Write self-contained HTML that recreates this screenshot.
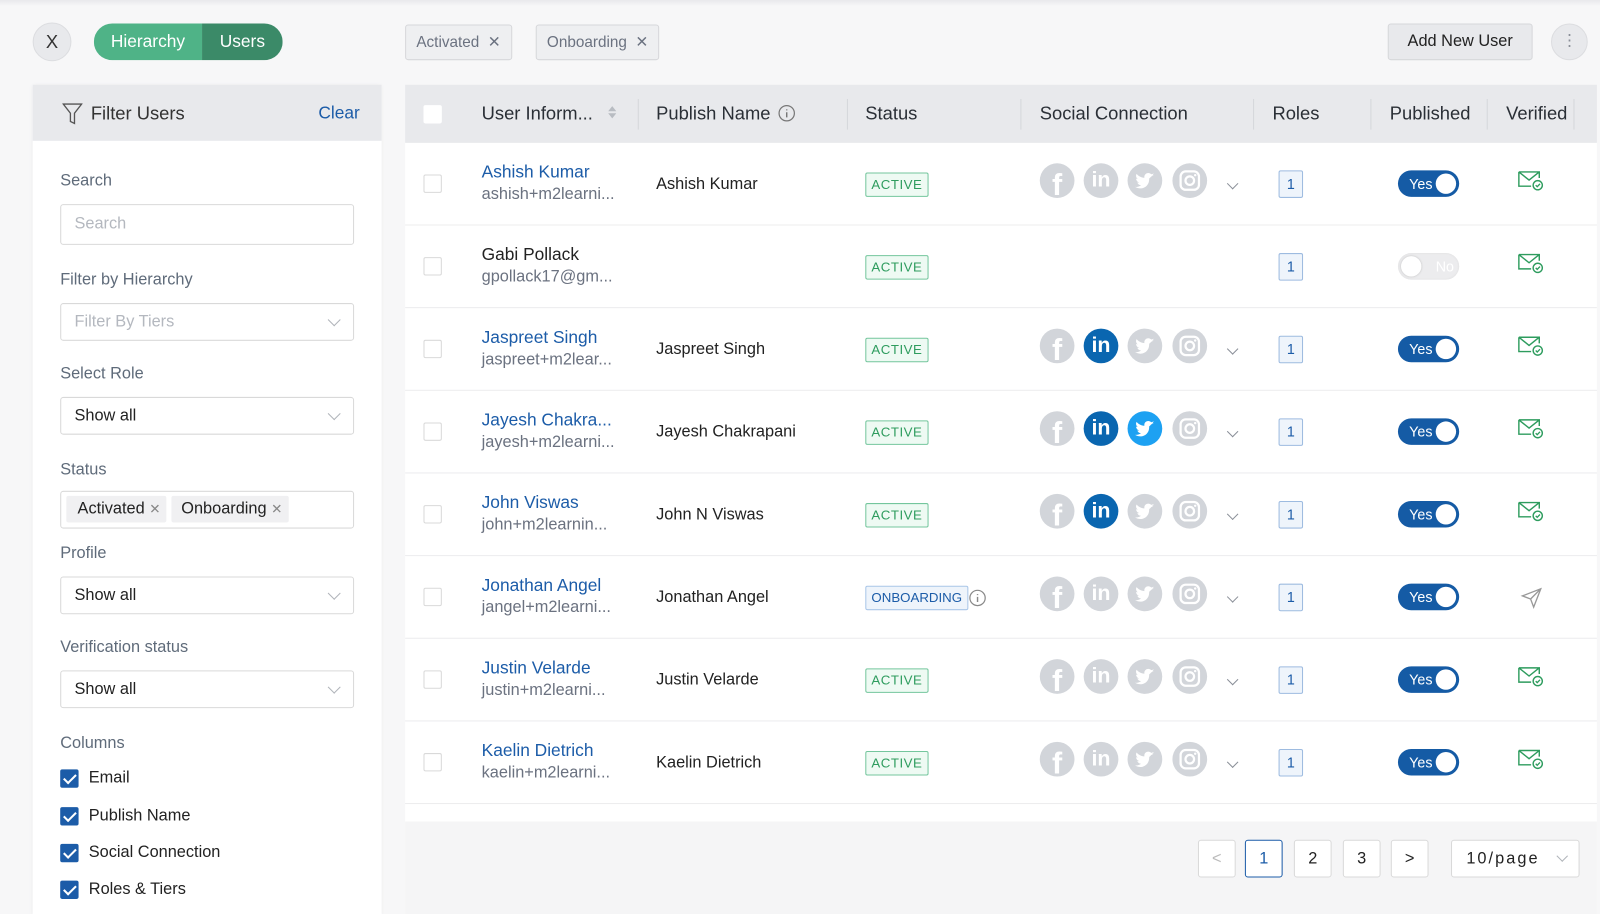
<!DOCTYPE html>
<html><head><meta charset="utf-8"><style>
*{box-sizing:border-box;margin:0;padding:0}
body{width:1600px;height:896px;overflow:hidden;background:#f7f7f8;font-family:"Liberation Sans",Arial,sans-serif;color:#1f2329;position:relative}
#w{position:absolute;left:0;top:0;width:1568px;height:878px;transform:scale(1.0204);transform-origin:0 0}
.a{position:absolute}
.topbar{left:0;top:0;width:1568px;height:6px;background:linear-gradient(#e9e9ec,#f7f7f8)}
.xbtn{left:32px;top:22px;width:38px;height:38px;border-radius:50%;background:#e8e9ec;border:1px solid #dcdde0;text-align:center;line-height:36px;font-size:18px;color:#333}
.seg{left:92px;top:23px;height:36px;width:185px;border-radius:18px;overflow:hidden;display:flex;font-size:17px;color:#fff}
.seg div{line-height:36px;text-align:center}
.chip{top:24px;height:35px;border:1px solid #d6d7da;border-radius:3px;background:#eeeff1;color:#6b7280;font-size:15px;line-height:33px;padding:0 10px}
.addb{left:1360px;top:23px;width:142px;height:36px;background:#e8e9ec;border:1px solid #d6d7da;border-radius:3px;font-size:16px;line-height:34px;text-align:center;color:#222}
.dots{left:1520px;top:23px;width:36px;height:36px;border-radius:50%;background:#e8e9ec;border:1px solid #dcdde0;color:#8a8f98;text-align:center;font-size:16px;line-height:33px}
.lp{left:32px;top:83px;width:342px;height:813px;background:#fff;box-shadow:0 1px 4px rgba(0,0,0,.06)}
.lph{left:0;top:0;width:342px;height:55px;background:#e8e9ec}
.lbl{left:27px;font-size:16px;color:#5f6b7a}
.inp{left:27px;width:288px;height:37px;border:1px solid #d9d9d9;border-radius:3px;background:#fff;font-size:16px;line-height:35px;padding-left:13px;color:#222}
.inp.ph{color:#b4b8bf}
.chev{position:absolute;right:14px;top:11px;width:9px;height:9px;border-right:1.2px solid #b0b4ba;border-bottom:1.2px solid #b0b4ba;transform:rotate(45deg)}
.cb{left:27px;width:18px;height:18px;background:#1c5ca8;border-radius:2px}
.cb:after{content:"";position:absolute;left:6px;top:2px;width:5px;height:10px;border-right:2px solid #fff;border-bottom:2px solid #fff;transform:rotate(45deg)}
.cbl{left:55px;font-size:16px;color:#222}
.tb{left:397px;top:83px;width:1168px;height:813px;background:#fff}
.th{left:0;top:0;width:1168px;height:57px;background:#e8e9ec;font-size:18px;color:#2a2f36}
.th span{position:absolute;top:18px}
.sep{position:absolute;top:14px;width:1px;height:30px;background:#d5d7db}
.bx{position:absolute;width:18px;height:18px;border:1px solid #d9d9d9;border-radius:2px;background:#fff}
.row{left:0;width:1168px;height:81px;border-bottom:1px solid #ececee}
.nm{position:absolute;left:75px;top:19px;font-size:17px;color:#1c5ca8}
.nm.k{color:#222}
.em{position:absolute;left:75px;top:42px;font-size:16px;color:#6b7280}
.pn{position:absolute;left:246px;top:32px;font-size:16px;color:#222}
.st{position:absolute;left:451px;top:29px;height:24px;border:1px solid #74c69d;background:#eefaf3;color:#2e9c5e;font-size:13px;letter-spacing:.5px;line-height:22px;padding:0 5px;border-radius:2px}
.st.ob{border-color:#a9c6e8;background:#eef4fb;color:#1c5ca8;letter-spacing:0}
.so{position:absolute;top:20px;width:34px;height:34px;border-radius:50%;background:#d2d5da;color:#fff;text-align:center;font-weight:bold;overflow:hidden}
.fb{left:622px;font-size:30px;line-height:44px}
.li{left:665px;font-size:21px;line-height:33px}
.tw{left:708px}
.ig{left:752px}
.so.on{background:#0a66b0}
.so.tw.on{background:#1da1f2}
.dd{position:absolute;left:807px;top:36px;width:8px;height:8px;border-right:1.3px solid #8a8f98;border-bottom:1.3px solid #8a8f98;transform:rotate(45deg)}
.rl{position:absolute;left:856px;top:27px;width:24px;height:27px;border:1px solid #9dbbe0;background:#eef4fb;border-radius:2px;color:#1c5ca8;font-size:14px;text-align:center;line-height:25px}
.tg{position:absolute;left:973px;top:27px;width:60px;height:26px;border-radius:13px;background:#155ba5;color:#fff;font-size:14px;line-height:26px;padding-left:11px}
.tg:after{content:"";position:absolute;right:3px;top:3px;width:20px;height:20px;border-radius:50%;background:#fff}
.tg.off{background:#ececee;color:#fff;padding-left:37px;box-shadow:inset 0 0 2px #ddd}
.tg.off:after{left:3px;right:auto;box-shadow:0 0 2px #bbb}
.vf{position:absolute;left:1090px;top:26px}
.ft{left:0;top:722px;width:1168px;height:91px;background:#f5f5f6}
.pg{position:absolute;top:18px;width:37px;height:37px;border:1px solid #d9d9d9;border-radius:3px;background:#fff;text-align:center;line-height:35px;font-size:16px;color:#222}
</style></head><body><div id="w">
<div class="a topbar"></div>
<div class="a xbtn">X</div>
<div class="a seg"><div style="width:106px;background:#4fb387">Hierarchy</div><div style="width:79px;background:#3b8a68">Users</div></div>
<div class="a chip" style="left:397px">Activated &nbsp;✕</div>
<div class="a chip" style="left:525px">Onboarding &nbsp;✕</div>
<div class="a addb">Add New User</div>
<div class="a dots">⋮</div>

<div class="a lp">
 <div class="a lph">
  <svg class="a" style="left:29px;top:18px" width="20" height="22" viewBox="0 0 20 22"><path d="M1 1h18l-7 9v10l-4-2v-8z" fill="none" stroke="#555" stroke-width="1.3"/></svg>
  <div class="a" style="left:57px;top:18px;font-size:18px;color:#333">Filter Users</div>
  <div class="a" style="left:280px;top:18px;font-size:17px;color:#1c5ca8">Clear</div>
 </div>
 <div class="a lbl" style="top:86px">Search</div>
 <div class="a inp ph" style="top:117px;height:40px;line-height:38px">Search</div>
 <div class="a lbl" style="top:183px">Filter by Hierarchy</div>
 <div class="a inp ph" style="top:214px">Filter By Tiers<div class="chev"></div></div>
 <div class="a lbl" style="top:275px">Select Role</div>
 <div class="a inp" style="top:306px">Show all<div class="chev"></div></div>
 <div class="a lbl" style="top:369px">Status</div>
 <div class="a inp" style="top:398px;padding-left:5px">
  <span style="display:inline-block;background:#f0f0f2;padding:0 6px 0 11px;line-height:26px;margin-top:4px;vertical-align:top;border-radius:2px">Activated <span style="color:#888;font-size:13px">✕</span></span>
  <span style="display:inline-block;background:#f0f0f2;padding:0 6px 0 10px;line-height:26px;margin-top:4px;vertical-align:top;border-radius:2px">Onboarding <span style="color:#888;font-size:13px">✕</span></span>
 </div>
 <div class="a lbl" style="top:451px">Profile</div>
 <div class="a inp" style="top:482px">Show all<div class="chev"></div></div>
 <div class="a lbl" style="top:543px">Verification status</div>
 <div class="a inp" style="top:574px">Show all<div class="chev"></div></div>
 <div class="a lbl" style="top:637px">Columns</div>
 <div class="a cb" style="top:671px"></div><div class="a cbl" style="top:671px">Email</div>
 <div class="a cb" style="top:708px"></div><div class="a cbl" style="top:708px">Publish Name</div>
 <div class="a cb" style="top:744px"></div><div class="a cbl" style="top:744px">Social Connection</div>
 <div class="a cb" style="top:780px"></div><div class="a cbl" style="top:780px">Roles &amp; Tiers</div>
</div>

<svg width="0" height="0" style="position:absolute"><defs>
<symbol id="bird" viewBox="0 0 24 24"><path fill="#fff" d="M22 5.9c-.7.3-1.5.5-2.4.6.9-.5 1.5-1.3 1.8-2.3-.8.5-1.7.8-2.6 1-1.600-1.7-4.4-1.8-6.1-.2-1.1 1-1.5 2.5-1.2 4C8.1 8.8 5.1 7.200 3.1 4.8c-1.1 1.9-.5 4.3 1.3 5.5-.6 0-1.3-.2-1.8-.5 0 2 1.4 3.7 3.3 4.1-.6.2-1.3.2-1.900.1.5 1.7 2.1 2.9 3.9 2.9-1.8 1.4-4.1 2.1-6.4 1.8 6.6 4 15.1.3 15.1-8.3V9.7c.8-.6 1.5-1.2 2-2z"/></symbol>
<symbol id="insta" viewBox="0 0 24 24"><rect x="3" y="3" width="18" height="18" rx="5" fill="none" stroke="#fff" stroke-width="2.2"/><circle cx="12" cy="12" r="4.2" fill="none" stroke="#fff" stroke-width="2.2"/><circle cx="17.3" cy="6.7" r="1.2" fill="#fff"/></symbol>
<symbol id="mail" viewBox="0 0 26 22"><path d="M1.5 2.5h20v6M1.5 2.5v14h12M1.5 2.5l10 8 10-8" fill="none" stroke="#2e9c5e" stroke-width="1.4"/><circle cx="20" cy="15.5" r="4.5" fill="#fff" stroke="#2e9c5e" stroke-width="1.4"/><path d="M18 15.5l1.5 1.5 2.7-2.8" fill="none" stroke="#2e9c5e" stroke-width="1.3"/></symbol>
</defs></svg>

<div class="a tb">
 <div class="a th">
  <div class="bx" style="left:18px;top:20px;border:none"></div>
  <span style="left:75px">User Inform...</span>
  <svg class="a" style="left:199px;top:20px" width="8" height="14"><path d="M0 6L4 1l4 5zM0 8l4 5 4-5z" fill="#b8bcc2"/></svg>
  <div class="sep" style="left:228px"></div>
  <span style="left:246px">Publish Name</span>
  <svg class="a" style="left:365px;top:19px" width="18" height="18"><circle cx="9" cy="9" r="7.5" fill="none" stroke="#777" stroke-width="1.2"/><path d="M9 8v5M9 5.2v1" stroke="#777" stroke-width="1.4"/></svg>
  <div class="sep" style="left:433px"></div>
  <span style="left:451px">Status</span>
  <div class="sep" style="left:603px"></div>
  <span style="left:622px">Social Connection</span>
  <div class="sep" style="left:831px"></div>
  <span style="left:850px">Roles</span>
  <div class="sep" style="left:946px"></div>
  <span style="left:965px">Published</span>
  <div class="sep" style="left:1060px"></div>
  <span style="left:1079px">Verified</span>
  <div class="sep" style="left:1145px"></div>
 </div>

 <div class="a row" style="top:57px">
  <div class="bx" style="left:18px;top:31px"></div>
  <div class="nm">Ashish Kumar</div><div class="em">ashish+m2learni...</div>
  <div class="pn">Ashish Kumar</div><div class="st">ACTIVE</div>
  <div class="so fb">f</div><div class="so li">in</div><div class="so tw"><svg width="22" height="22" style="margin-top:6px"><use href="#bird"/></svg></div><div class="so ig"><svg width="24" height="24" style="margin-top:5px"><use href="#insta"/></svg></div><div class="dd"></div>
  <div class="rl">1</div><div class="tg">Yes</div><svg class="vf" width="26" height="22"><use href="#mail"/></svg>
 </div>
 <div class="a row" style="top:138px">
  <div class="bx" style="left:18px;top:31px"></div>
  <div class="nm k">Gabi Pollack</div><div class="em">gpollack17@gm...</div>
  <div class="st">ACTIVE</div>
  <div class="rl">1</div><div class="tg off">No</div><svg class="vf" width="26" height="22"><use href="#mail"/></svg>
 </div>
 <div class="a row" style="top:219px">
  <div class="bx" style="left:18px;top:31px"></div>
  <div class="nm">Jaspreet Singh</div><div class="em">jaspreet+m2lear...</div>
  <div class="pn">Jaspreet Singh</div><div class="st">ACTIVE</div>
  <div class="so fb">f</div><div class="so li on">in</div><div class="so tw"><svg width="22" height="22" style="margin-top:6px"><use href="#bird"/></svg></div><div class="so ig"><svg width="24" height="24" style="margin-top:5px"><use href="#insta"/></svg></div><div class="dd"></div>
  <div class="rl">1</div><div class="tg">Yes</div><svg class="vf" width="26" height="22"><use href="#mail"/></svg>
 </div>
 <div class="a row" style="top:300px">
  <div class="bx" style="left:18px;top:31px"></div>
  <div class="nm">Jayesh Chakra...</div><div class="em">jayesh+m2learni...</div>
  <div class="pn">Jayesh Chakrapani</div><div class="st">ACTIVE</div>
  <div class="so fb">f</div><div class="so li on">in</div><div class="so tw on"><svg width="22" height="22" style="margin-top:6px"><use href="#bird"/></svg></div><div class="so ig"><svg width="24" height="24" style="margin-top:5px"><use href="#insta"/></svg></div><div class="dd"></div>
  <div class="rl">1</div><div class="tg">Yes</div><svg class="vf" width="26" height="22"><use href="#mail"/></svg>
 </div>
 <div class="a row" style="top:381px">
  <div class="bx" style="left:18px;top:31px"></div>
  <div class="nm">John Viswas</div><div class="em">john+m2learnin...</div>
  <div class="pn">John N Viswas</div><div class="st">ACTIVE</div>
  <div class="so fb">f</div><div class="so li on">in</div><div class="so tw"><svg width="22" height="22" style="margin-top:6px"><use href="#bird"/></svg></div><div class="so ig"><svg width="24" height="24" style="margin-top:5px"><use href="#insta"/></svg></div><div class="dd"></div>
  <div class="rl">1</div><div class="tg">Yes</div><svg class="vf" width="26" height="22"><use href="#mail"/></svg>
 </div>
 <div class="a row" style="top:462px">
  <div class="bx" style="left:18px;top:31px"></div>
  <div class="nm">Jonathan Angel</div><div class="em">jangel+m2learni...</div>
  <div class="pn">Jonathan Angel</div><div class="st ob">ONBOARDING</div>
  <svg class="a" style="left:552px;top:32px" width="18" height="18"><circle cx="9" cy="9" r="7.5" fill="none" stroke="#888" stroke-width="1.2"/><path d="M9 8v5M9 5.2v1" stroke="#888" stroke-width="1.4"/></svg>
  <div class="so fb">f</div><div class="so li">in</div><div class="so tw"><svg width="22" height="22" style="margin-top:6px"><use href="#bird"/></svg></div><div class="so ig"><svg width="24" height="24" style="margin-top:5px"><use href="#insta"/></svg></div><div class="dd"></div>
  <div class="rl">1</div><div class="tg">Yes</div>
  <svg class="vf" width="22" height="22" style="top:30px;left:1093px"><path d="M2 9L20 2 13 20 10 12z M10 12L20 2" fill="none" stroke="#999" stroke-width="1.3"/></svg>
 </div>
 <div class="a row" style="top:543px">
  <div class="bx" style="left:18px;top:31px"></div>
  <div class="nm">Justin Velarde</div><div class="em">justin+m2learni...</div>
  <div class="pn">Justin Velarde</div><div class="st">ACTIVE</div>
  <div class="so fb">f</div><div class="so li">in</div><div class="so tw"><svg width="22" height="22" style="margin-top:6px"><use href="#bird"/></svg></div><div class="so ig"><svg width="24" height="24" style="margin-top:5px"><use href="#insta"/></svg></div><div class="dd"></div>
  <div class="rl">1</div><div class="tg">Yes</div><svg class="vf" width="26" height="22"><use href="#mail"/></svg>
 </div>
 <div class="a row" style="top:624px">
  <div class="bx" style="left:18px;top:31px"></div>
  <div class="nm">Kaelin Dietrich</div><div class="em">kaelin+m2learni...</div>
  <div class="pn">Kaelin Dietrich</div><div class="st">ACTIVE</div>
  <div class="so fb">f</div><div class="so li">in</div><div class="so tw"><svg width="22" height="22" style="margin-top:6px"><use href="#bird"/></svg></div><div class="so ig"><svg width="24" height="24" style="margin-top:5px"><use href="#insta"/></svg></div><div class="dd"></div>
  <div class="rl">1</div><div class="tg">Yes</div><svg class="vf" width="26" height="22"><use href="#mail"/></svg>
 </div>

 <div class="a ft">
  <div class="pg" style="left:777px;color:#bbb">&lt;</div>
  <div class="pg" style="left:823px;border-color:#1c5ca8;color:#1c5ca8">1</div>
  <div class="pg" style="left:871px">2</div>
  <div class="pg" style="left:919px">3</div>
  <div class="pg" style="left:966px">&gt;</div>
  <div class="pg" style="left:1025px;width:126px;text-align:left;padding-left:14px;letter-spacing:2px">10/page<div class="chev" style="right:12px;top:11px;width:8px;height:8px"></div></div>
 </div>
</div>
</div></body></html>
